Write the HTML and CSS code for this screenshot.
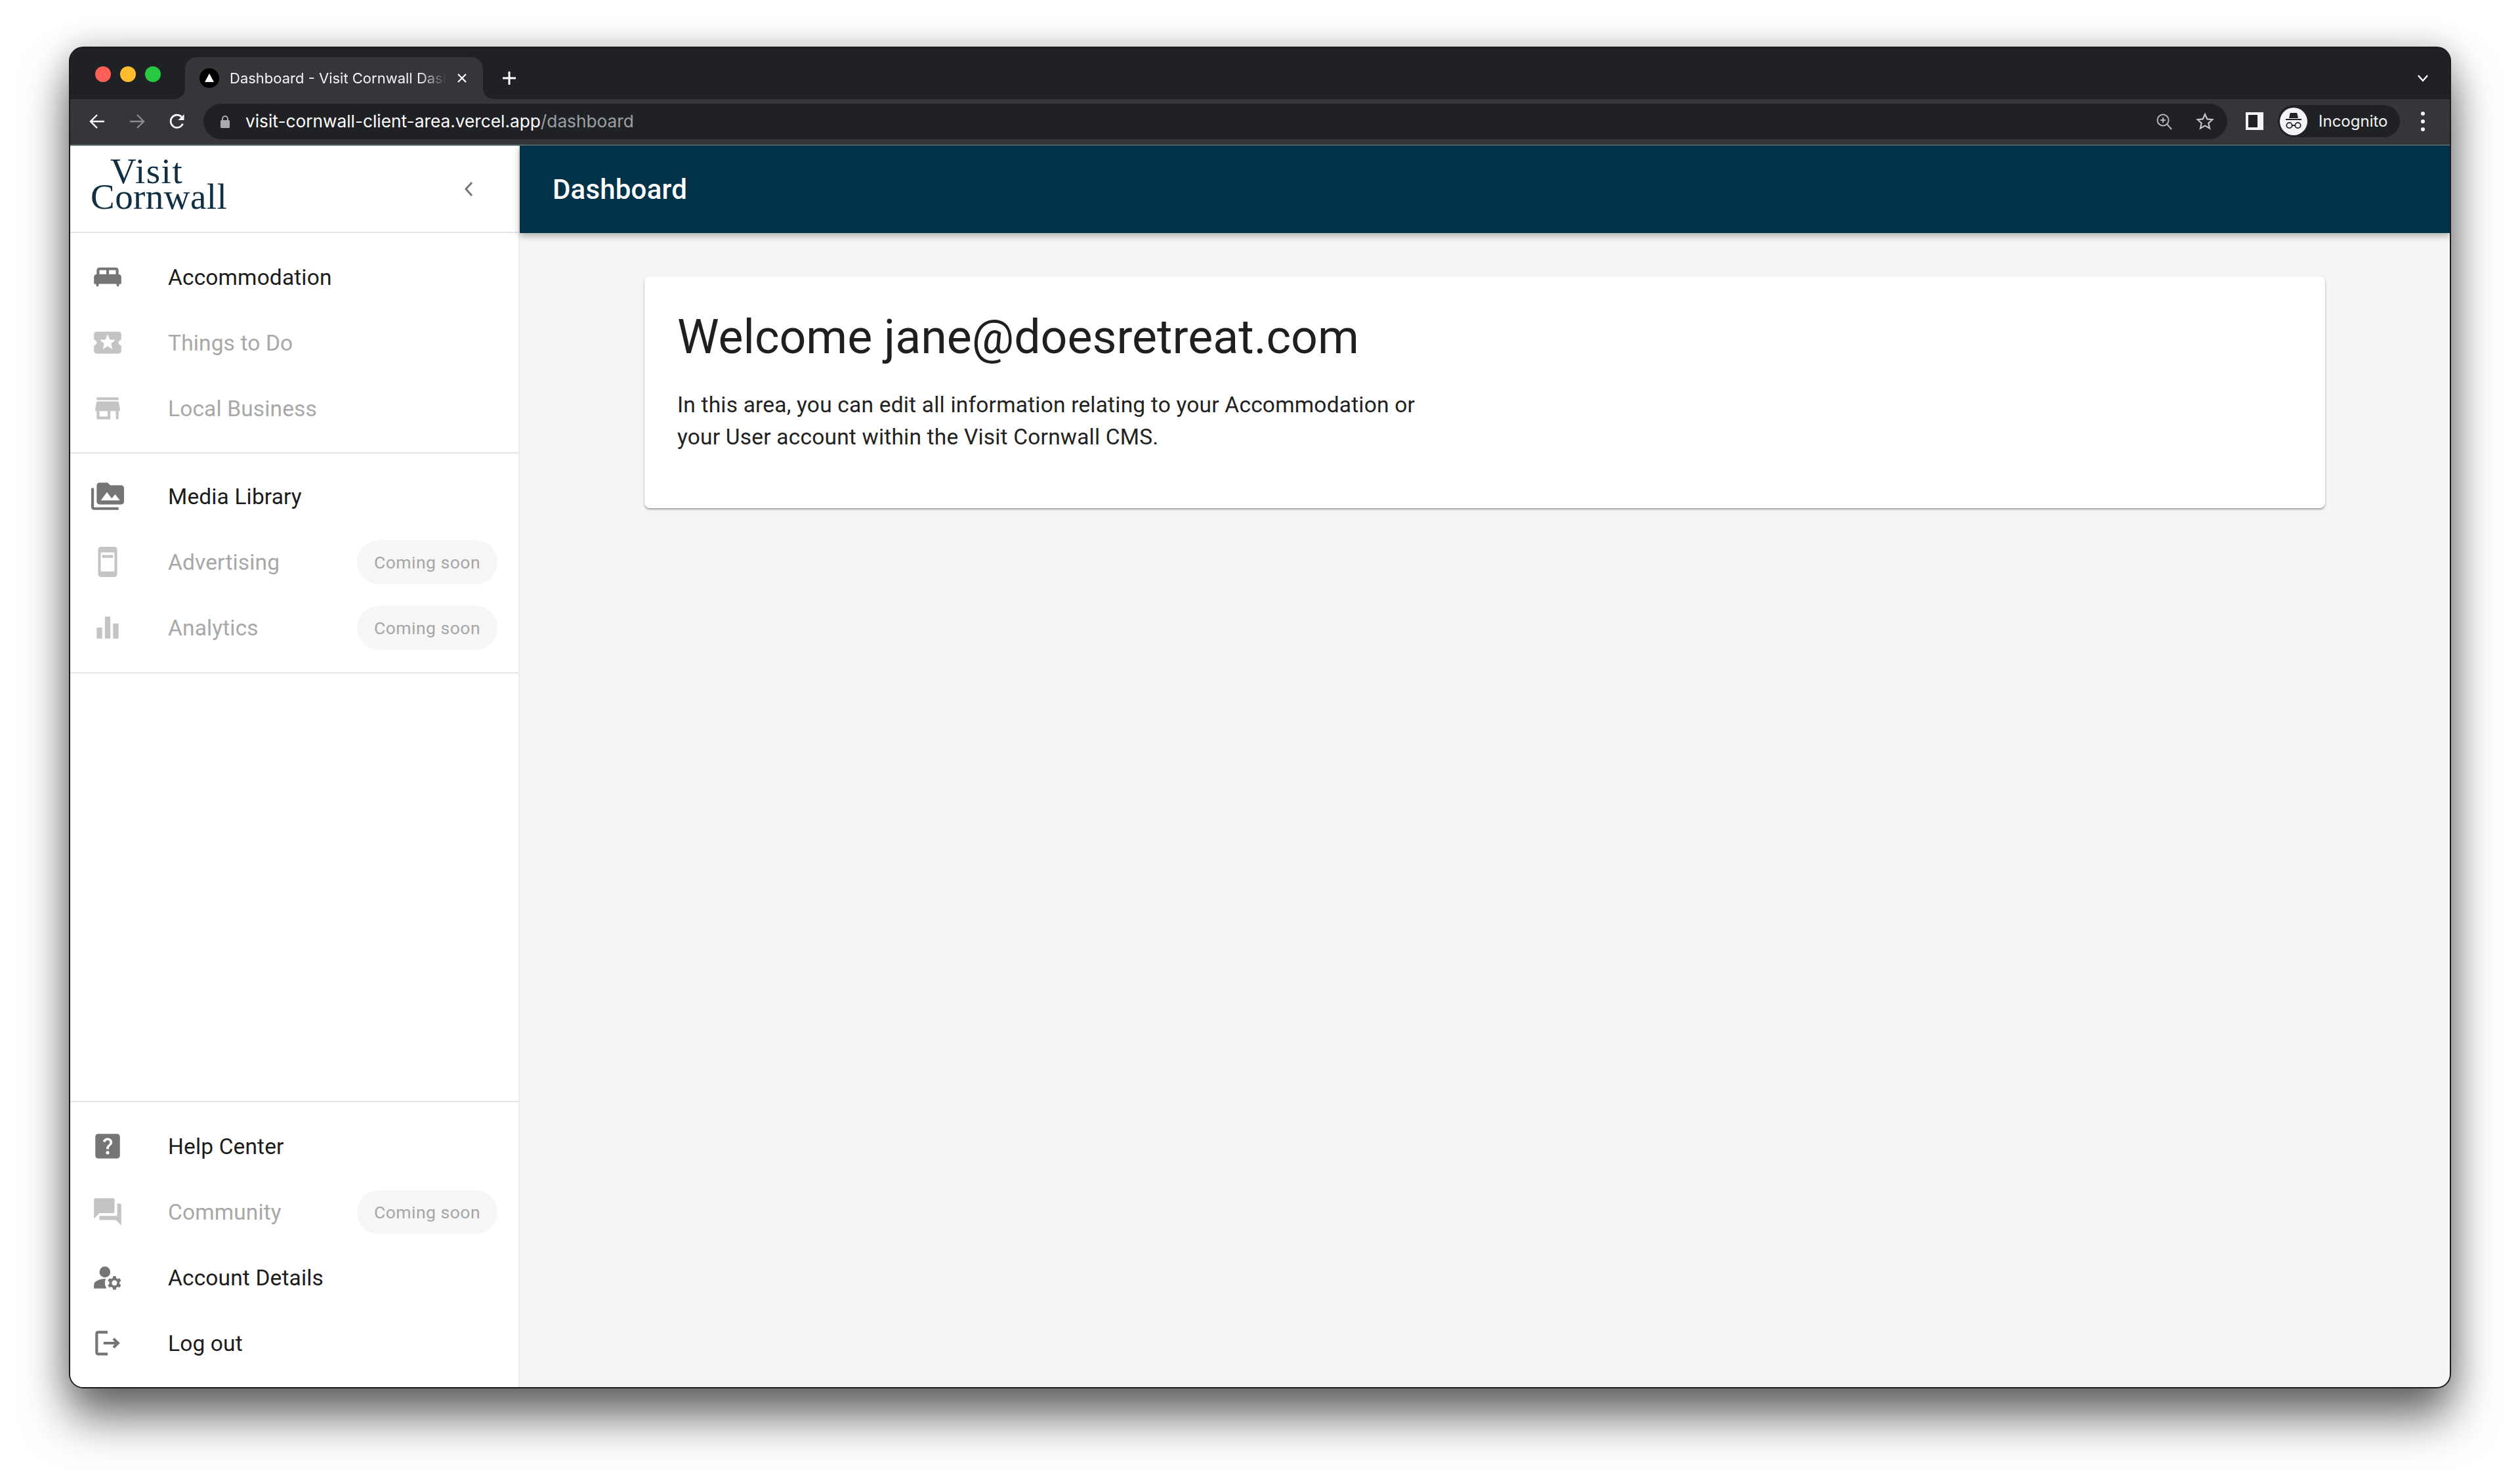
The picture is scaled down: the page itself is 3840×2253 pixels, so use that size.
FILE: index.html
```html
<!DOCTYPE html>
<html lang="en">
<head>
<meta charset="utf-8">
<title>Dashboard - Visit Cornwall Dashboard</title>
<link rel="stylesheet" href="styles.css">
</head>
<body>
<div class="window">
  <div class="tabstrip">
    <div class="lights"><span class="light red"></span><span class="light yellow"></span><span class="light green"></span></div>
    <div class="tab">
      <span class="favicon"><svg viewBox="0 0 30 30"><circle cx="15" cy="15" r="15" fill="#000"/><path d="M15 8l7 13H8z" fill="#fff"/></svg></span>
      <span class="tab-title">Dashboard - Visit Cornwall Dashboard</span>
      <svg class="tab-close" viewBox="0 0 16 16"><path d="M2 2l12 12M14 2L2 14" stroke="#fff" stroke-width="2.2" fill="none"/></svg>
    </div>
    <svg class="new-tab" viewBox="0 0 24 24"><path d="M12 2v20M2 12h20" stroke="#fff" stroke-width="3" fill="none"/></svg>
    <svg class="tab-menu" viewBox="0 0 18 12"><path d="M2 2l7 8 7-8" stroke="#fff" stroke-width="2.4" fill="none"/></svg>
  </div>
  <div class="toolbar">
    <svg class="nav-icon" viewBox="0 0 26 26"><path d="M24 13H3M13 3L3 13l10 10" stroke="#fff" stroke-width="2.4" fill="none"/></svg>
    <svg class="nav-icon dim" viewBox="0 0 26 26"><path d="M2 13h21M13 3l10 10-10 10" stroke="#8a8b8d" stroke-width="2.4" fill="none"/></svg>
    <svg class="nav-icon" viewBox="0 0 26 26"><path d="M21.5 16.5A9.6 9.6 0 1 1 19.5 6" stroke="#fff" stroke-width="2.6" fill="none"/><path d="M23.5 2v9h-9z" fill="#fff"/></svg>
    <div class="omnibox">
      <svg class="lock" viewBox="0 0 16 20"><path d="M4 9V6a4 4 0 0 1 8 0v3" stroke="#a9aaac" stroke-width="2" fill="none"/><rect x="1" y="8" width="14" height="12" rx="1.5" fill="#a9aaac"/></svg>
      <span class="url"><span class="url-host">visit-cornwall-client-area.vercel.app</span><span class="url-path">/dashboard</span></span>
      <svg class="omni-icon" viewBox="0 0 26 26"><circle cx="11" cy="11" r="8.5" stroke="#b4b5b7" stroke-width="2" fill="none"/><path d="M17 17l7 8M11 7v8M7 11h8" stroke="#b4b5b7" stroke-width="2" fill="none"/></svg>
      <svg class="omni-icon star" viewBox="0 0 28 28"><path d="M14 3l3.3 7.4 8 .8-6 5.4 1.7 7.9L14 20.4l-7 4.1 1.7-7.9-6-5.4 8-.8z" stroke="#c4c5c7" stroke-width="2.2" fill="none"/></svg>
    </div>
    <span class="side-panel"></span>
    <div class="profile">
      <svg class="avatar" viewBox="0 0 42 42"><circle cx="21" cy="21" r="21" fill="#f1f3f4"/><path d="M14 16l1.8-8h10.4l1.800 8z" fill="#202124"/><rect x="9" y="17" width="24" height="2" fill="#202124"/><circle cx="14.500" cy="27" r="4.200" stroke="#202124" stroke-width="1.800" fill="none"/><circle cx="27.500" cy="27" r="4.200" stroke="#202124" stroke-width="1.800" fill="none"/><path d="M18.500 27h5" stroke="#202124" stroke-width="1.800"/></svg>
      <span class="profile-name">Incognito</span>
    </div>
    <span class="kebab"><i></i><i></i><i></i></span>
  </div>
  <div class="page">
    <aside class="sidebar">
      <div class="brand">
        <div class="logo"><span class="logo-top">Visit</span><span class="logo-bottom">Cornwall</span></div>
        <svg class="collapse" viewBox="0 0 16 26"><path d="M13 3L4 13l9 10" stroke="#757575" stroke-width="3" fill="none"/></svg>
      </div>
      <ul class="nav">
        <li class="nav-item"><svg class="icon" viewBox="0 0 24 24"><path d="M20 10V7c0-1.100-.9-2-2-2H6c-1.100 0-2 .9-2 2v3c-1.100 0-2 .9-2 2v5h1.330L4 19h1l.67-2h12.670l.66 2h1l.67-2H22v-5c0-1.100-.9-2-2-2zm-9 0H6V7h5v3zm7 0h-5V7h5v3z"/></svg><span class="label">Accommodation</span></li>
        <li class="nav-item off"><svg class="icon" viewBox="0 0 24 24"><path d="M20 12c0-1.100.9-2 2-2V6c0-1.100-.9-2-2-2H4c-1.100 0-1.990.9-1.990 2v4c1.100 0 1.990.9 1.990 2s-.89 2-2 2v4c0 1.100.9 2 2 2h16c1.100 0 2-.9 2-2v-4c-1.100 0-2-.9-2-2zm-4.420 4.800L12 14.500l-3.580 2.300 1.080-4.120-3.290-2.690 4.240-.25L12 5.800l1.540 3.950 4.240.25-3.290 2.690 1.090 4.110z"/></svg><span class="label">Things to Do</span></li>
        <li class="nav-item off"><svg class="icon" viewBox="0 0 24 24"><path d="M20 4H4v2h16V4zm1 10v-2l-1-5H4l-1 5v2h1v6h10v-6h4v6h2v-6h1zm-9 4H6v-4h6v4z"/></svg><span class="label">Local Business</span></li>
      </ul>
      <ul class="nav nav-media">
        <li class="nav-item"><svg class="icon" viewBox="0 0 24 24"><path d="M2 6H0v5h.01L0 20c0 1.100.9 2 2 2h18v-2H2V6zm20-2h-8l-2-2H6c-1.100 0-1.990.9-1.990 2L4 16c0 1.100.9 2 2 2h16c1.100 0 2-.9 2-2V6c0-1.100-.9-2-2-2zM7 15l4.500-6 3.500 4.510 2.500-3.010L21 15H7z"/></svg><span class="label">Media Library</span></li>
        <li class="nav-item off"><svg class="icon" viewBox="0 0 24 24"><path d="M17 1.010 7 1c-1.100 0-2 .9-2 2v18c0 1.100.9 2 2 2h10c1.100 0 2-.9 2-2V3c0-1.100-.9-1.990-2-1.990zM17 19H7V5h10v14zM16 7H8v2h8V7z"/></svg><span class="label">Advertising</span><span class="chip">Coming soon</span></li>
        <li class="nav-item off"><svg class="icon" viewBox="0 0 24 24"><path d="M4 12h4v8H4zm6-8h4v16h-4zm6 5h4v11h-4z"/></svg><span class="label">Analytics</span><span class="chip">Coming soon</span></li>
      </ul>
      <ul class="nav nav-bottom">
        <li class="nav-item"><svg class="icon" viewBox="0 0 24 24"><path d="M19 3H5c-1.100 0-2 .9-2 2v14c0 1.100.9 2 2 2h14c1.100 0 2-.9 2-2V5c0-1.100-.9-2-2-2zm-6.990 15c-.7 0-1.260-.56-1.260-1.260 0-.71.56-1.250 1.260-1.250.71 0 1.250.54 1.250 1.250-.01.69-.54 1.260-1.250 1.260zm3.010-7.400c-.76 1.110-1.480 1.460-1.870 2.170-.16.29-.22.48-.22 1.410h-1.820c0-.49-.08-1.290.31-1.980.49-.87 1.420-1.390 1.960-2.160.57-.81.25-2.330-1.370-2.330-1.060 0-1.580.8-1.800 1.480l-1.650-.7C9.010 7.150 10.220 6 11.990 6c1.480 0 2.490.67 3.010 1.520.44.72.7 2.070.02 3.080z"/></svg><span class="label">Help Center</span></li>
        <li class="nav-item off"><svg class="icon" viewBox="0 0 24 24"><path d="M21 6h-2v9H6v2c0 .55.45 1 1 1h11l4 4V7c0-.55-.45-1-1-1zm-4 6V3c0-.55-.45-1-1-1H3c-.55 0-1 .45-1 1v14l4-4h10c.55 0 1-.45 1-1z"/></svg><span class="label">Community</span><span class="chip">Coming soon</span></li>
        <li class="nav-item"><svg class="icon" viewBox="0 0 24 24"><circle cx="10" cy="8" r="4"/><path d="M10.670 13.020c-.22-.01-.44-.02-.67-.02-2.420 0-4.680.67-6.610 1.820-.88.52-1.390 1.500-1.390 2.530V20h9.260c-.79-1.130-1.260-2.510-1.260-4 0-1.070.25-2.070.67-2.980z"/><path d="M20.750 16c0-.22-.03-.42-.06-.63l1.140-1.010-1-1.730-1.450.49c-.32-.27-.68-.48-1.080-.63L18 11h-2l-.3 1.490c-.4.15-.76.36-1.080.63l-1.450-.49-1 1.730 1.140 1.010c-.03.21-.06.41-.06.63s.03.42.06.63l-1.140 1.010 1 1.730 1.450-.49c.32.27.68.48 1.080.63L16 21h2l.3-1.490c.4-.15.76-.36 1.080-.63l1.450.49 1-1.730-1.140-1.010c.03-.21.06-.41.06-.63zM17 18c-1.100 0-2-.9-2-2s.9-2 2-2 2 .9 2 2-.9 2-2 2z"/></svg><span class="label">Account Details</span></li>
        <li class="nav-item"><svg class="icon" viewBox="0 0 24 24"><path d="M17 8l-1.410 1.410L17.170 11H9v2h8.170l-1.580 1.580L17 16l4-4-4-4zM5 5h7V3H5c-1.100 0-2 .9-2 2v14c0 1.100.9 2 2 2h7v-2H5V5z"/></svg><span class="label">Log out</span></li>
      </ul>
    </aside>
    <div class="content">
      <header class="appbar"><h1 class="appbar-title">Dashboard</h1></header>
      <main class="main">
        <section class="card">
          <h2 class="card-title">Welcome jane@doesretreat.com</h2>
          <p class="card-text">In this area, you can edit all information relating to your Accommodation or your User account within the Visit Cornwall CMS.</p>
        </section>
      </main>
    </div>
  </div>
</div>
</body>
</html>
```
FILE: styles.css
```css
* { box-sizing: border-box; }
html, body { margin: 0; height: 100%; background: #fff; }
body { padding: 71px 105px 138px; font-family: Roboto, "Liberation Sans", sans-serif; overflow: hidden; }

.window {
  height: 100%;
  display: flex;
  flex-direction: column;
  border: 2px solid #1b1b1d;
  border-radius: 22px;
  overflow: hidden;
  background: #202124;
  box-shadow: 0 44px 70px rgba(0,0,0,.58), 0 0 50px rgba(0,0,0,.2);
}

/* Browser chrome */
.tabstrip { height: 78px; flex: none; display: flex; align-items: flex-end; background: #202124; padding-left: 38px; padding-right: 32px; position: relative; }
.lights { display: flex; gap: 14px; align-self: flex-start; margin-top: 28px; margin-right: 37px; }
.light { width: 24px; height: 24px; border-radius: 50%; }
.red { background: #ff5f57; }
.yellow { background: #febc2e; }
.green { background: #28c840; }
.tab { width: 454px; height: 64px; background: #35363a; border-radius: 18px 18px 0 0; display: flex; align-items: center; padding: 0 24px 0 22px; position: relative; }
.tab::before, .tab::after { content: ""; position: absolute; bottom: 0; width: 16px; height: 16px; }
.tab::before { left: -16px; background: radial-gradient(circle at 0 0, transparent 15.500px, #35363a 16px); }
.tab::after { right: -16px; background: radial-gradient(circle at 100% 0, transparent 15.500px, #35363a 16px); }
.favicon { width: 30px; height: 30px; flex: none; display: flex; margin-right: 16px; }
.favicon svg { width: 30px; height: 30px; }
.tab-title { flex: 1; min-width: 0; white-space: nowrap; overflow: hidden; font: 22px "Inter", "Liberation Sans", sans-serif; color: #f1f3f4; -webkit-mask-image: linear-gradient(to right, #000 88%, transparent 100%); mask-image: linear-gradient(to right, #000 88%, transparent 100%); }
.tab-close { width: 16px; height: 16px; flex: none; margin-left: 16px; }
.new-tab { width: 24px; height: 24px; align-self: center; margin-left: 28px; margin-top: 14px; flex: none; }
.tab-menu { width: 18px; height: 12px; align-self: center; margin-left: auto; margin-top: 14px; flex: none; }

.toolbar { height: 71px; flex: none; display: flex; align-items: center; background: #35363a; border-bottom: 2px solid #56646d; padding: 0 38px 2px 28px; }
.nav-icon { width: 26px; height: 26px; flex: none; margin-right: 35px; }
.nav-icon + .omnibox { margin-left: -8px; }
.omnibox { flex: 1; height: 54px; background: #202124; border-radius: 27px; display: flex; align-items: center; padding: 0 20px 0 25px; }
.lock { width: 16px; height: 20px; flex: none; margin-right: 23px; }
.url { flex: 1; font: 26.250px "Inter", "Liberation Sans", sans-serif; white-space: nowrap; }
.url-host { color: #fff; }
.url-path { color: #9aa0a6; }
.omni-icon { width: 26px; height: 26px; flex: none; }
.omni-icon.star { width: 28px; height: 28px; margin-left: 35px; }
.side-panel { width: 27px; height: 27px; flex: none; margin-left: 28px; background: #202124; border: solid #f1f3f4; border-width: 4px 9px 4px 4px; }
.profile { width: 186px; height: 49px; flex: none; margin-left: 22px; background: #202124; border-radius: 25px; display: flex; align-items: center; padding-left: 3px; }
.avatar { width: 42px; height: 42px; flex: none; margin-right: 17px; }
.profile-name { font: 24px "Inter", "Liberation Sans", sans-serif; color: #f1f3f4; white-space: nowrap; }
.kebab { display: flex; flex-direction: column; gap: 6px; margin-left: 32px; flex: none; }
.kebab i { width: 6px; height: 6px; border-radius: 50%; background: #f1f3f4; }

/* Page */
.page { flex: 1; min-height: 0; display: flex; background: #f5f5f5; }
.sidebar { width: 685px; flex: none; display: flex; flex-direction: column; background: #fff; border-right: 2px solid #ececec; }
.brand { height: 133px; flex: none; display: flex; align-items: center; justify-content: space-between; padding: 0 68px 0 31px; border-bottom: 2px solid #e4e4e4; }
.logo { display: flex; flex-direction: column; font-family: "Liberation Serif", serif; font-size: 55px; line-height: 39px; color: #0f2f45; margin-top: -16px; }
.logo-top { margin-left: 30px; letter-spacing: 1.500px; }
.logo-bottom { letter-spacing: .45px; }
.collapse { width: 16px; height: 26px; flex: none; }

.nav { list-style: none; margin: 0; padding: 17px 0; border-bottom: 2px solid #e4e4e4; }
.nav-media { padding: 15px 0 18px; }
.nav-bottom { margin-top: auto; border-bottom: 0; border-top: 2px solid #e4e4e4; }
.nav-item { height: 100px; display: flex; align-items: center; padding: 0 32px; font-size: 33.500px; letter-spacing: .14px; color: #1c1c1c; }
.icon { width: 50px; height: 50px; flex: none; fill: #757575; margin-right: 67px; }
.label { flex: 1; white-space: nowrap; }
.off .label { color: #a8a8a8; }
.off .icon { fill: #c4c4c4; }
.chip { width: 214px; height: 67px; flex: none; display: flex; align-items: center; justify-content: center; border-radius: 34px; background: #f6f6f6; font-size: 26.500px; color: #a6a6a6; letter-spacing: .5px; }

.content { flex: 1; min-width: 0; display: flex; flex-direction: column; }
.appbar { height: 133px; flex: none; display: flex; align-items: center; padding: 0 50px; background: #00334a; box-shadow: 0 4px 10px rgba(0,0,0,.3); }
.appbar-title { margin: 0; font-size: 42px; font-weight: 500; color: #fff; letter-spacing: .2px; }
.main { flex: 1; padding: 66px 190px; }
.card { height: 353px; background: #fff; border-radius: 8px; padding: 51px 50px 44px; box-shadow: 0 2px 3px rgba(0,0,0,.35), 0 0 2px rgba(0,0,0,.06); }
.card-title { margin: 0 0 36px; font-size: 71.700px; font-weight: 400; line-height: 84px; color: #1f1f1f; }
.card-text { margin: 0; max-width: 1160px; font-size: 33.500px; line-height: 49px; color: #222; letter-spacing: .2px; }
```
